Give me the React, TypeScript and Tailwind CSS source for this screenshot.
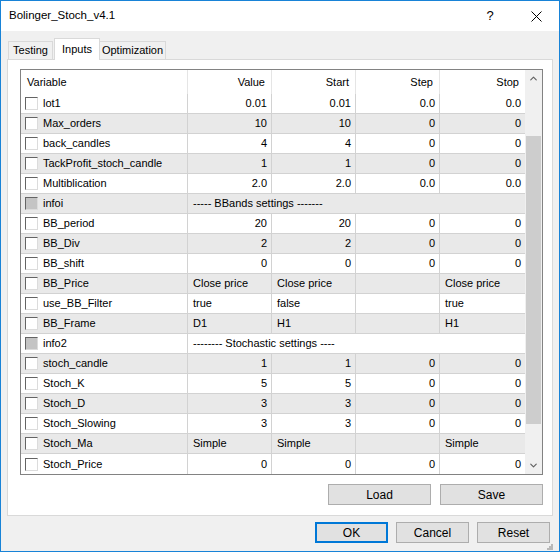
import { ChevronUp, ChevronDown } from "lucide-react";

type Row = {
  name: string;
  info?: string;
  text?: boolean;
  cells?: [string, string, string, string];
};

const rows: Row[] = [
  { name: "lot1", cells: ["0.01", "0.01", "0.0", "0.0"] },
  { name: "Max_orders", cells: ["10", "10", "0", "0"] },
  { name: "back_candles", cells: ["4", "4", "0", "0"] },
  { name: "TackProfit_stoch_candle", cells: ["1", "1", "0", "0"] },
  { name: "Multiblication", cells: ["2.0", "2.0", "0.0", "0.0"] },
  { name: "infoi", info: "----- BBands settings -------" },
  { name: "BB_period", cells: ["20", "20", "0", "0"] },
  { name: "BB_Div", cells: ["2", "2", "0", "0"] },
  { name: "BB_shift", cells: ["0", "0", "0", "0"] },
  { name: "BB_Price", text: true, cells: ["Close price", "Close price", "", "Close price"] },
  { name: "use_BB_Filter", text: true, cells: ["true", "false", "", "true"] },
  { name: "BB_Frame", text: true, cells: ["D1", "H1", "", "H1"] },
  { name: "info2", info: "-------- Stochastic settings ----" },
  { name: "stoch_candle", cells: ["1", "1", "0", "0"] },
  { name: "Stoch_K", cells: ["5", "5", "0", "0"] },
  { name: "Stoch_D", cells: ["3", "3", "0", "0"] },
  { name: "Stoch_Slowing", cells: ["3", "3", "0", "0"] },
  { name: "Stoch_Ma", text: true, cells: ["Simple", "Simple", "", "Simple"] },
  { name: "Stoch_Price", cells: ["0", "0", "0", "0"] },
];

const widths = ["w-[84px]", "w-[84px]", "w-[84px]", "w-[85px]"];

function Check({ disabled }: { disabled?: boolean }) {
  return (
    <span
      className={
        disabled
          ? "inline-block h-[13px] w-[13px] border border-t-[#646464] border-l-[#646464] border-b-[#dcdcdc] border-r-[#dcdcdc] bg-[#c4c4c4]"
          : "inline-block h-[13px] w-[13px] border border-t-[#646464] border-l-[#646464] border-b-[#dcdcdc] border-r-[#dcdcdc] bg-white"
      }
    />
  );
}

function Btn({ label, w, primary }: { label: string; w: string; primary?: boolean }) {
  return (
    <div
      className={`${w} flex h-[21px] items-center justify-center bg-[#e1e1e1] text-[12px] text-black ${
        primary ? "border-2 border-[#0078d7]" : "border border-[#adadad]"
      }`}
    >
      {label}
    </div>
  );
}

function GridRow({ row, idx }: { row: Row; idx: number }) {
  const bg = idx % 2 === 1 ? "bg-[#e9e9e9]" : "bg-white";
  const last = idx === rows.length - 1;
  return (
    <div className={`flex h-[20px] ${bg} ${last ? "" : "border-b border-[#d2d2d2]"}`}>
      <div className="flex w-[167px] items-center gap-[5px] border-r border-[#d2d2d2] pl-[4px]">
        <Check disabled={!!row.info} />
        <span>{row.name}</span>
      </div>
      {row.info ? (
        <div className="flex flex-1 items-center pl-[5px]">{row.info}</div>
      ) : (
        row.cells!.map((c, i) => (
          <div
            key={i}
            className={`flex ${widths[i]} items-center ${
              row.text ? "justify-start pl-[5px]" : "justify-end pr-[4px]"
            } ${i < 3 ? "border-r border-[#d2d2d2]" : ""}`}
          >
            {c}
          </div>
        ))
      )}
    </div>
  );
}

export default function App() {
  return (
    <div
      className="flex h-[552px] w-[560px] flex-col border border-[#1883d7] bg-[#f0f0f0] text-black"
      style={{ fontFamily: '"Liberation Sans", Arial, sans-serif' }}
    >
      {/* title bar */}
      <div className="flex h-[30px] items-center bg-white pl-[8px] text-[11.5px]">
        <span className="flex-1">Bolinger_Stoch_v4.1</span>
        <span className="w-[46px] text-center text-[13px]">?</span>
        <span className="flex w-[46px] items-center justify-center">
          <svg width="11" height="11" viewBox="0 0 11 11">
            <path d="M0.5 0.5L10.5 10.5M10.5 0.5L0.5 10.5" stroke="#000" strokeWidth="1" />
          </svg>
        </span>
      </div>

      <div className="flex flex-1 flex-col px-[6px] text-[11px]">
        {/* tabs */}
        <div className="mt-[6px] flex h-[22px] items-end">
          <div className="ml-[1px] flex h-[18px] w-[45px] items-center justify-center border border-b-0 border-[#d9d9d9] bg-[#f0f0f0]">
            Testing
          </div>
          <div className="relative -mb-px ml-[1px] flex h-[22px] w-[46px] items-start justify-center border border-b-0 border-[#d9d9d9] bg-white pt-[2px]">
            Inputs
          </div>
          <div className="flex h-[18px] w-[66px] items-center justify-center border border-b-0 border-l-0 border-[#d9d9d9] bg-[#f0f0f0]">
            Optimization
          </div>
        </div>

        {/* tab panel */}
        <div className="flex h-[457px] flex-col border border-[#d9d9d9] bg-white pl-[12px] pr-[8px] pt-[9px]">
          <div className="flex h-[406px] w-[523px] border border-[#828282]">
            <div className="flex w-[504px] flex-col">
              <div className="flex h-[24px] bg-white">
                <div className="flex w-[167px] items-center border-r border-[#e5e5e5] pl-[6px]">Variable</div>
                {["Value", "Start", "Step", "Stop"].map((h, i) => (
                  <div
                    key={h}
                    className={`flex ${widths[i]} items-center justify-end pr-[6px] ${
                      i < 3 ? "border-r border-[#e5e5e5]" : ""
                    }`}
                  >
                    {h}
                  </div>
                ))}
              </div>
              {rows.map((r, i) => (
                <GridRow key={r.name} row={r} idx={i} />
              ))}
            </div>
            {/* scrollbar */}
            <div className="flex w-[17px] flex-col bg-[#f0f0f0]">
              <div className="flex h-[17px] items-center justify-center">
                <ChevronUp size={11} strokeWidth={2.5} color="#606060" />
              </div>
              <div className="flex flex-1 flex-col px-[1px]">
                <div className="h-[49px]" />
                <div className="h-[288px] bg-[#cdcdcd]" />
              </div>
              <div className="flex h-[17px] items-center justify-center">
                <ChevronDown size={11} strokeWidth={2.5} color="#606060" />
              </div>
            </div>
          </div>
          <div className="mt-[9px] flex justify-end gap-[9px] pr-[1px]">
            <Btn label="Load" w="w-[103px]" />
            <Btn label="Save" w="w-[103px]" />
          </div>
        </div>

        {/* bottom buttons */}
        <div className="mt-[6px] flex items-start justify-end gap-[8px] pr-[3px]">
          <Btn label="OK" w="w-[73px]" primary />
          <Btn label="Cancel" w="w-[73px]" />
          <Btn label="Reset" w="w-[73px]" />
        </div>
        <div className="flex flex-1 items-end justify-end pb-[1px]">
          <svg width="6" height="6" viewBox="0 0 6 6">
            <rect x="4" y="0" width="2" height="2" fill="#b8b8b8" />
            <rect x="2" y="2" width="2" height="2" fill="#b8b8b8" />
            <rect x="4" y="2" width="2" height="2" fill="#b8b8b8" />
            <rect x="0" y="4" width="2" height="2" fill="#b8b8b8" />
            <rect x="2" y="4" width="2" height="2" fill="#b8b8b8" />
            <rect x="4" y="4" width="2" height="2" fill="#b8b8b8" />
          </svg>
        </div>
      </div>
    </div>
  );
}
